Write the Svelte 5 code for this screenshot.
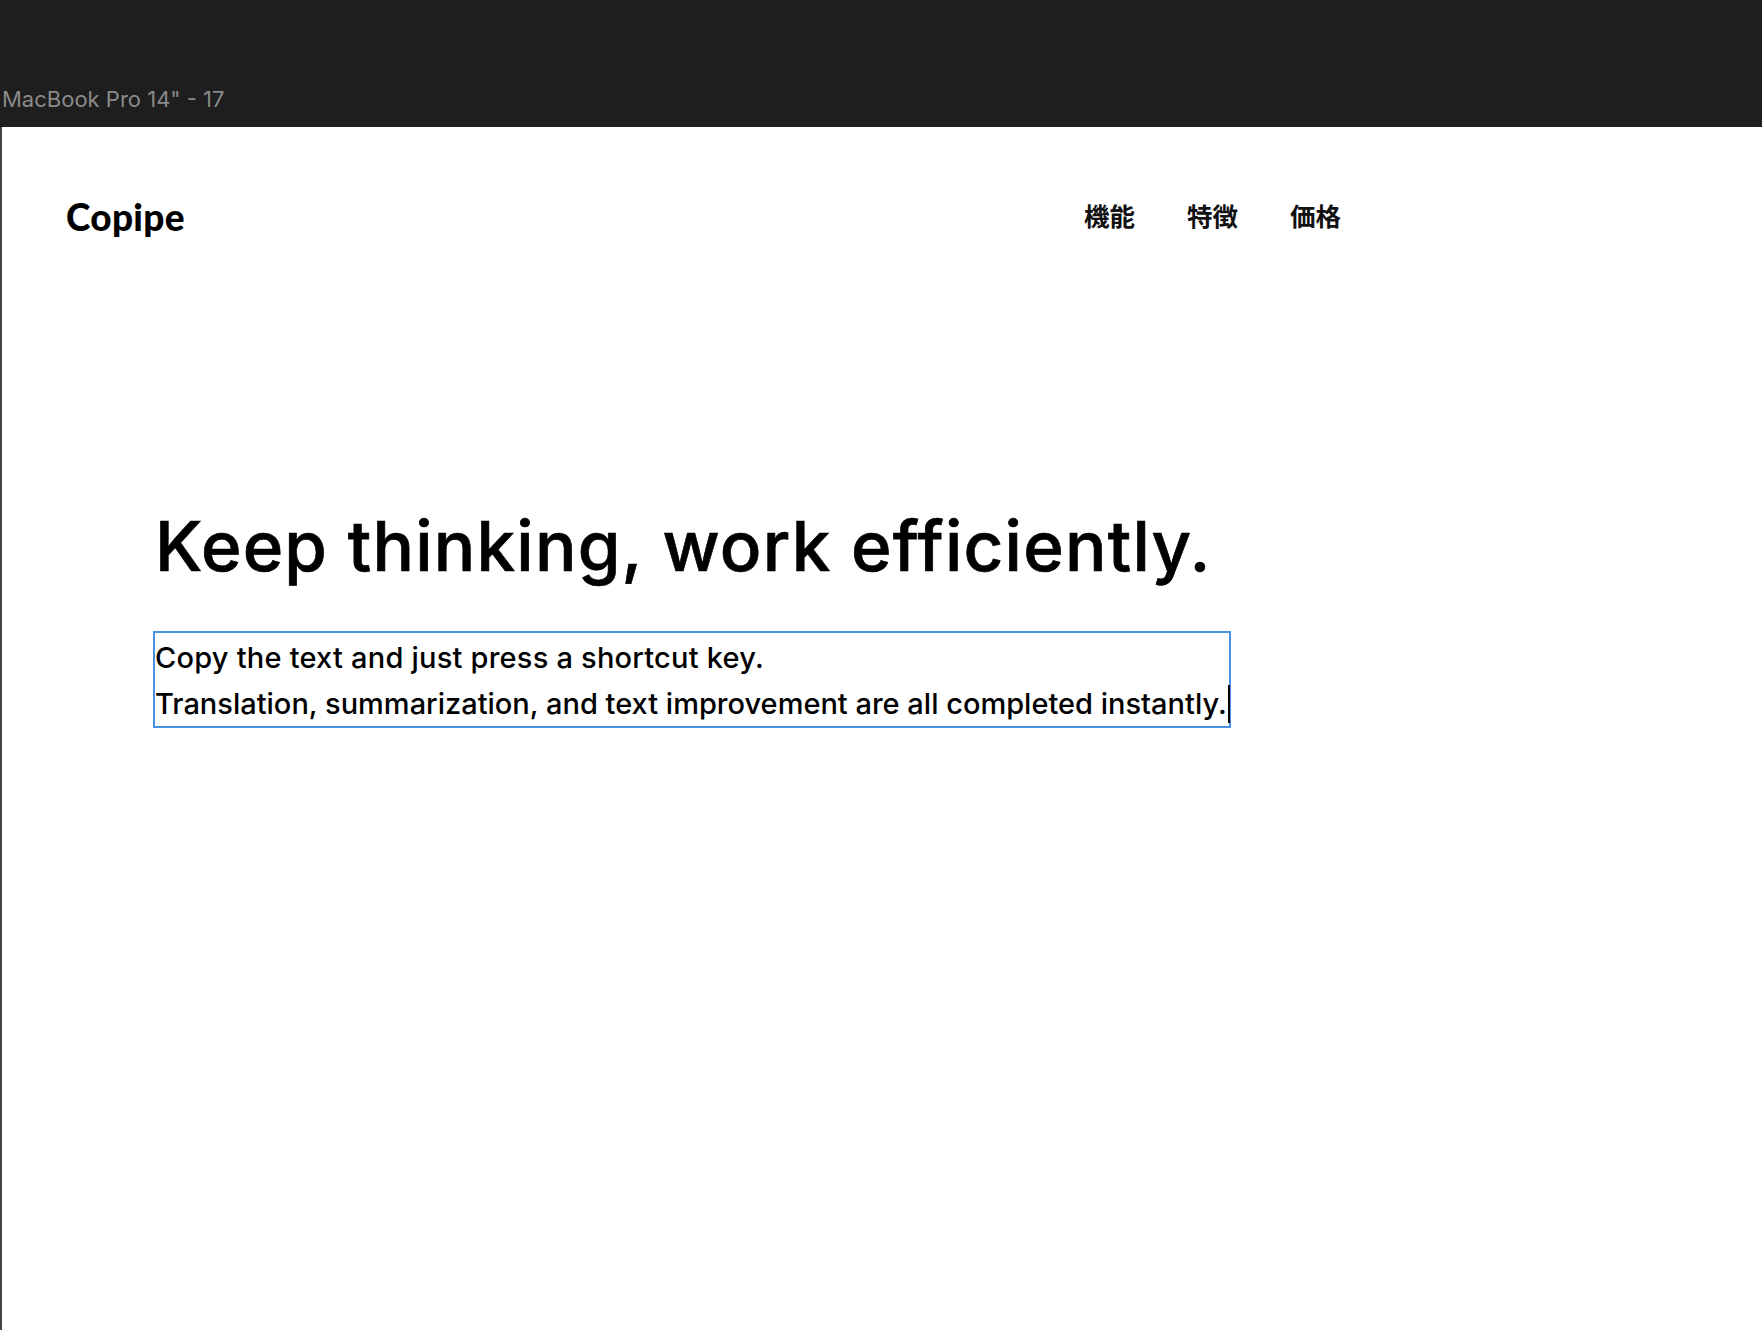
<script>
  const links = ['機能', '特徴', '価格'];
</script>

<div class="page">
  <div class="chrome"><span class="frame-name">MacBook Pro 14" - 17</span></div>
  <div class="canvas">
    <nav class="nav">
      <div class="logo">Copipe</div>
      <ul class="links">
        {#each links as link}
          <li>{link}</li>
        {/each}
      </ul>
    </nav>
    <main class="hero">
      <h1>Keep thinking, work efficiently.</h1>
      <div class="selected">
        <p class="first">Copy the text and just press a shortcut key.</p>
        <p class="last"><span class="line">Translation, summarization, and text improvement are all completed instantly.<span class="caret"></span></span></p>
      </div>
    </main>
  </div>
</div>

<style>
  :global(body) {
    margin: 0;
    background: #fff;
  }
  .page {
    width: 1762px;
    height: 1330px;
    display: flex;
    flex-direction: column;
    overflow: hidden;
    font-family: Inter, "Noto Sans CJK JP", sans-serif;
  }
  .chrome {
    height: 127px;
    flex: none;
    background: #1e1e1e;
    display: flex;
    align-items: flex-end;
    box-sizing: border-box;
    padding: 0 0 15px 2px;
  }
  .frame-name {
    color: #8a8a8a;
    font-family: Inter, sans-serif;
    font-size: 22px;
    line-height: 26px;
  }
  .canvas {
    flex: 1;
    border-left: 2px solid #444;
    background: #fff;
  }
  .nav {
    display: flex;
    align-items: center;
    justify-content: space-between;
    width: 1275px;
    padding: 72px 0 0 64px;
    height: 36px;
  }
  .logo {
    font-family: Lato, sans-serif;
    font-weight: 900;
    font-size: 37px;
    letter-spacing: 0.3px;
    line-height: 36px;
    color: #000;
  }
  .links {
    list-style: none;
    display: flex;
    gap: 52px;
    margin: -4px 0 0;
    padding: 0;
    font-family: "Noto Sans CJK JP", sans-serif;
    font-weight: 700;
    font-size: 25.5px;
    line-height: 36px;
    color: #111;
  }
  .hero {
    padding: 266px 0 0 151px;
  }
  h1 {
    margin: 0 0 40px 2px;
    font-size: 69px;
    line-height: 90px;
    font-weight: 500;
    letter-spacing: 1.2px;
    -webkit-text-stroke: 0.7px #000;
    color: #000;
  }
  .selected {
    width: 1074px;
    height: 91px;
    border: 2px solid #4a90e2;
    padding-top: 2px;
    font-size: 29px;
    font-weight: 500;
    line-height: 46px;
    color: #000;
  }
  p {
    margin: 0;
  }
  .first {
    letter-spacing: 0.22px;
  }
  .last {
    white-space: nowrap;
  }
  .line {
    position: relative;
    display: inline-block;
  }
  .caret {
    position: absolute;
    right: -3px;
    top: 4px;
    width: 2px;
    height: 38px;
    background: #000;
  }
</style>
